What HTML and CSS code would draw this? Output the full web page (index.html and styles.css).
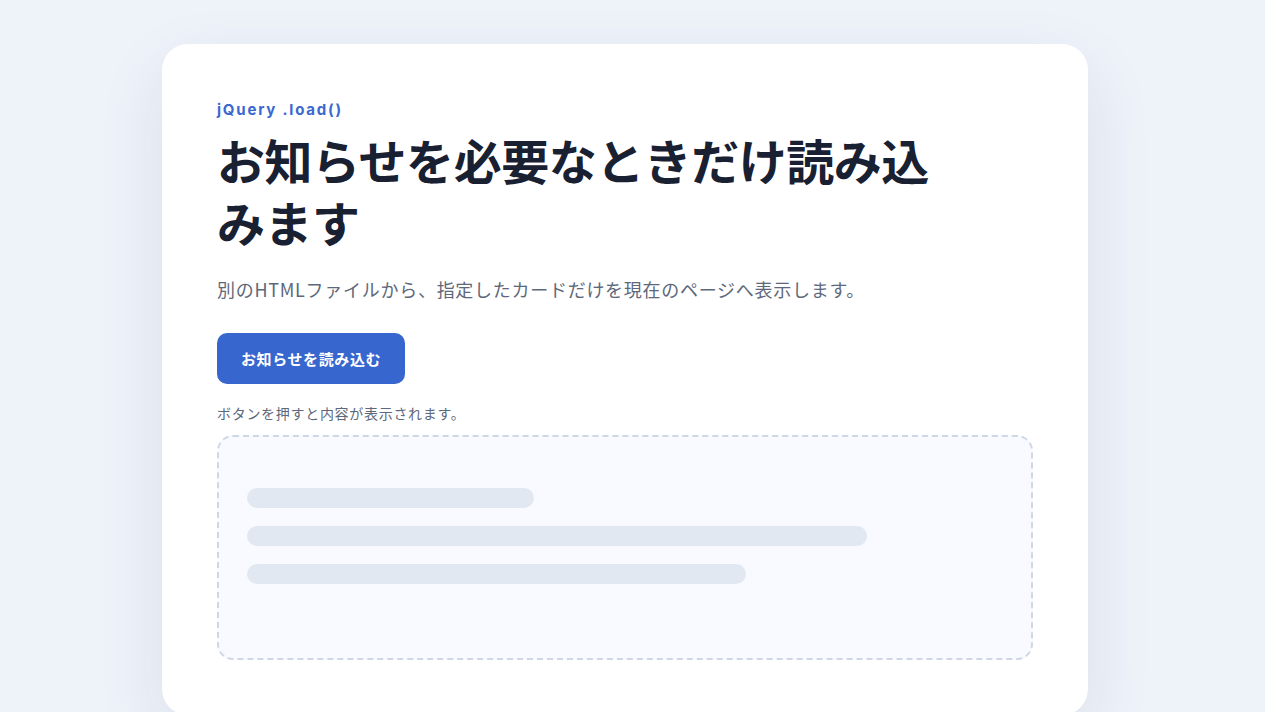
FILE: index.html
```html
<!DOCTYPE html>
<html lang="ja">

<head>
    <meta charset="UTF-8">
    <meta name="viewport" content="width=device-width, initial-scale=1.0">
    <title>jQuery .load() お知らせ</title>
    <link rel="stylesheet" href="styles.css">
</head>

<body>
    <main class="card">
        <p class="eyebrow">jQuery .load()</p>
        <h1 class="title">お知らせを必要なときだけ読み込みます</h1>
        <p class="lead">別のHTMLファイルから、指定したカードだけを現在のページへ表示します。</p>

        <button class="btn" type="button">お知らせを読み込む</button>
        <p class="note">ボタンを押すと内容が表示されます。</p>

        <!-- 読み込み先 -->
        <div class="result">
            <div class="skeleton">
                <span class="bar bar-1"></span>
                <span class="bar bar-2"></span>
                <span class="bar bar-3"></span>
            </div>
        </div>
    </main>
</body>

</html>
```

FILE: styles.css
```css
* {
    margin: 0;
    padding: 0;
    box-sizing: border-box;
}

html {
    background: #eef2f9;
    overflow-y: scroll;
}

body {
    /* 右側はスクロールバー分 */
    padding: 44px 39px 46px 24px;
    font-family: Inter, "Noto Sans CJK JP", sans-serif;
    color: #1a2233;
}

::-webkit-scrollbar {
    width: 15px;
}

::-webkit-scrollbar-track {
    background: #2b2b2b;
}

::-webkit-scrollbar-thumb {
    background: #6b6b6b;
    border: 2px solid #2b2b2b;
    border-radius: 8px;
}

.card {
    width: 926px;
    margin: 0 auto;
    padding: 56px 55px 55px;
    background: #fff;
    border-radius: 26px;
    box-shadow: 0 24px 70px rgba(28, 48, 92, .09);
}

.eyebrow {
    font-size: 15px;
    line-height: 20px;
    font-weight: 700;
    letter-spacing: .12em;
    color: #3a68d0;
    margin-bottom: 8px;
}

.title {
    max-width: 740px;
    font-family: "Noto Sans CJK JP", sans-serif;
    font-size: 48px;
    line-height: 62px;
    font-weight: 700;
    letter-spacing: -.01em;
    color: #182032;
}

.lead {
    margin-top: 22px;
    font-family: "Noto Sans CJK JP", sans-serif;
    font-size: 18px;
    line-height: 30px;
    letter-spacing: .04em;
    color: #5d687a;
}

.btn {
    display: block;
    margin-top: 29px;
    padding: 15px 24px;
    font-family: "Noto Sans CJK JP", sans-serif;
    font-size: 15px;
    line-height: 21px;
    font-weight: 700;
    letter-spacing: .04em;
    color: #fff;
    background: #3866cf;
    border: 0;
    border-radius: 10px;
    cursor: pointer;
}

.btn:hover {
    background: #2f59bb;
}

.note {
    margin-top: 19px;
    font-family: "Noto Sans CJK JP", sans-serif;
    font-size: 14px;
    line-height: 20px;
    letter-spacing: .05em;
    color: #5d687a;
}

.result {
    margin-top: 12px;
    height: 225px;
    padding: 51px 28px 0;
    background: #f8faff;
    border: 2px dashed #cfd7e5;
    border-radius: 16px;
}

.skeleton {
    display: flex;
    flex-direction: column;
    gap: 18px;
}

.bar {
    display: block;
    height: 20px;
    border-radius: 10px;
    background: #e2e8f1;
}

.bar-1 {
    width: 38%;
}

.bar-2 {
    width: 82%;
}

.bar-3 {
    width: 66%;
}
```
